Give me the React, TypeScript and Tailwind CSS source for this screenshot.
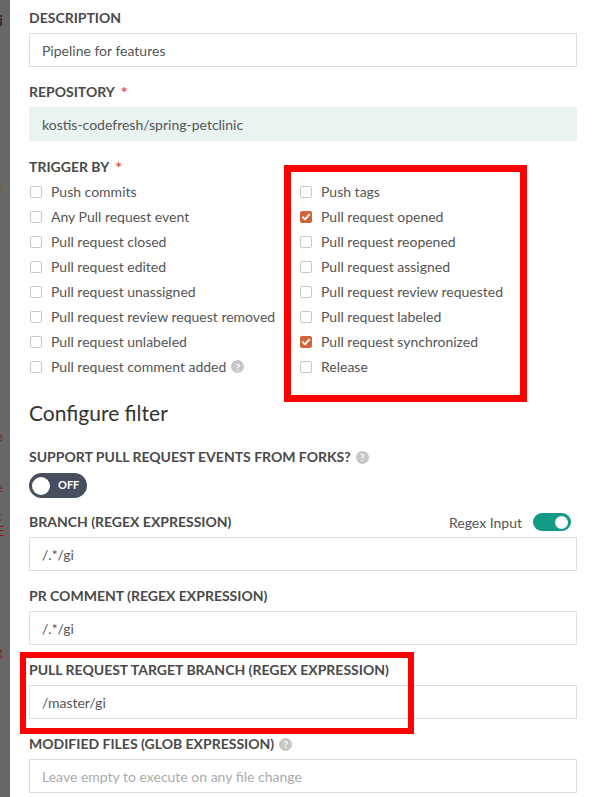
import React from "react";

const Q = () => (
  <span className="ml-[5px] inline-flex h-[13px] w-[13px] items-center justify-center rounded-full bg-[#c6c6c6] text-[10px] font-bold leading-none text-white">
    ?
  </span>
);

const Label = ({ children }: { children: React.ReactNode }) => (
  <div className="flex h-4 items-center text-[14px] font-bold uppercase leading-4 text-[#4a4a4a]">{children}</div>
);

const Star = () => <span className="ml-[6px] text-[16px] font-bold leading-4 text-[#e8503e]">*</span>;

const Input = ({ value, placeholder, bg }: { value?: string; placeholder?: string; bg?: boolean }) => (
  <div
    className={
      bg
        ? "flex h-[34px] items-center border border-[#e9f3f1] bg-[#e9f3f1] px-3 text-[14px] text-[#555]"
        : "flex h-[34px] items-center border border-[#dedede] bg-white px-3 text-[14px] text-[#555]"
    }
  >
    {value ? <span>{value}</span> : <span className="text-[#ababab]">{placeholder}</span>}
  </div>
);

const Check = ({ label, checked, help }: { label: string; checked?: boolean; help?: boolean }) => (
  <div className="flex h-[25px] items-center pl-[1px]">
    {checked ? (
      <span className="flex h-[12px] w-[12px] items-center justify-center rounded-[2px] bg-[#d2643a]">
        <svg width="12" height="12" viewBox="0 0 12 12">
          <polyline points="2.8,6.2 5,8.4 9.3,3.6" fill="none" stroke="white" strokeWidth="1.8" strokeLinecap="round" strokeLinejoin="round" />
        </svg>
      </span>
    ) : (
      <span className="h-[12px] w-[12px] rounded-[2px] border border-[#c8c8c8] bg-white" />
    )}
    <span className="ml-[9px] text-[14px] text-[#555]">{label}</span>
    {help && <Q />}
  </div>
);

export default function App() {
  const left = [
    "Push commits",
    "Any Pull request event",
    "Pull request closed",
    "Pull request edited",
    "Pull request unassigned",
    "Pull request review request removed",
    "Pull request unlabeled",
    "Pull request comment added",
  ];
  const right: [string, boolean][] = [
    ["Push tags", false],
    ["Pull request opened", true],
    ["Pull request reopened", false],
    ["Pull request assigned", false],
    ["Pull request review requested", false],
    ["Pull request labeled", false],
    ["Pull request synchronized", true],
    ["Release", false],
  ];
  return (
    <div className="relative flex h-[797px] w-[597px] overflow-hidden bg-white" style={{ fontFamily: "Lato, 'Open Sans', sans-serif" }}>
      <div className="relative w-[10px] shrink-0 overflow-hidden bg-[#676767]">
        <span className="absolute left-[-1px] top-[12px] text-[16px] leading-none text-[#222]">i</span>
        <span className="absolute left-[-4px] top-[180px] text-[13px] leading-none text-[#7a4a10]">c</span>
        <span className="absolute left-[-4px] top-[200px] text-[13px] leading-none text-[#7a4a10]">c</span>
        <span className="absolute left-[-4px] top-[430px] text-[13px] leading-none text-[#7a3010]">e</span>
        <span className="absolute left-[-4px] top-[481px] text-[13px] leading-none text-[#7a3010]">e</span>
        <span className="absolute left-[-4px] top-[510px] text-[13px] leading-none text-[#7a3010]">c</span>
        <span className="absolute left-[-3px] top-[525px] text-[13px] leading-none text-[#8a1a10]">E</span>
        <span className="absolute left-[-4px] top-[620px] text-[13px] leading-none text-[#7a3010]">-</span>
        <span className="absolute left-[-4px] top-[646px] text-[13px] leading-none text-[#7a3010]">g</span>
      </div>
      <div className="flex-1 pl-[19px] pr-[20px] pt-[10px]">
        <Label>Description</Label>
        <div className="mt-[7px]">
          <Input value="Pipeline for features" />
        </div>
        <div className="mt-[17px]">
          <Label>
            Repository
            <Star />
          </Label>
        </div>
        <div className="mt-[7px]">
          <Input value="kostis-codefresh/spring-petclinic" bg />
        </div>
        <div className="mt-[18px]">
          <Label>
            Trigger by
            <Star />
          </Label>
        </div>
        <div className="mt-[4px] grid grid-cols-[270px_1fr]">
          <div>
            {left.map((l, i) => (
              <Check key={l} label={l} help={i === 7} />
            ))}
          </div>
          <div>
            {right.map(([l, c]) => (
              <Check key={l} label={l} checked={c} />
            ))}
          </div>
        </div>
        <div className="mt-[22px] text-[21px] leading-6 text-[#333]">Configure filter</div>
        <div className="mt-[24px]">
          <Label>
            Support pull request events from forks?
            <Q />
          </Label>
        </div>
        <div className="mt-2 flex h-[25px] w-[58px] items-center rounded-full bg-[#474e5d] pl-[3px]">
          <span className="h-[18px] w-[18px] rounded-full bg-white" />
          <span className="ml-[8px] text-[11px] font-bold text-white">OFF</span>
        </div>
        <div className="mt-4 flex h-4 items-center justify-between">
          <Label>Branch (Regex Expression)</Label>
          <div className="mr-[6px] flex items-center">
            <span className="text-[14px] text-[#555]">Regex Input</span>
            <span className="ml-[11px] flex h-[18px] w-[38px] items-center justify-end rounded-full bg-[#139a86] pr-[3px]">
              <span className="h-[13px] w-[13px] rounded-full bg-white" />
            </span>
          </div>
        </div>
        <div className="mt-[7px]">
          <Input value="/.*/gi" />
        </div>
        <div className="mt-[17px]">
          <Label>PR Comment (Regex Expression)</Label>
        </div>
        <div className="mt-[7px]">
          <Input value="/.*/gi" />
        </div>
        <div className="mt-[17px]">
          <Label>Pull Request Target Branch (Regex Expression)</Label>
        </div>
        <div className="mt-[7px]">
          <Input value="/master/gi" />
        </div>
        <div className="mt-[17px]">
          <Label>
            Modified files (Glob Expression)
            <Q />
          </Label>
        </div>
        <div className="mt-[7px]">
          <Input placeholder="Leave empty to execute on any file change" />
        </div>
      </div>
      <div className="pointer-events-none absolute left-[284px] top-[165px] h-[237px] w-[243px] border-[7px] border-[#ff0000]" />
      <div className="pointer-events-none absolute left-[20px] top-[652px] h-[82px] w-[394px] border-[6px] border-[#ff0000]" />
    </div>
  );
}
